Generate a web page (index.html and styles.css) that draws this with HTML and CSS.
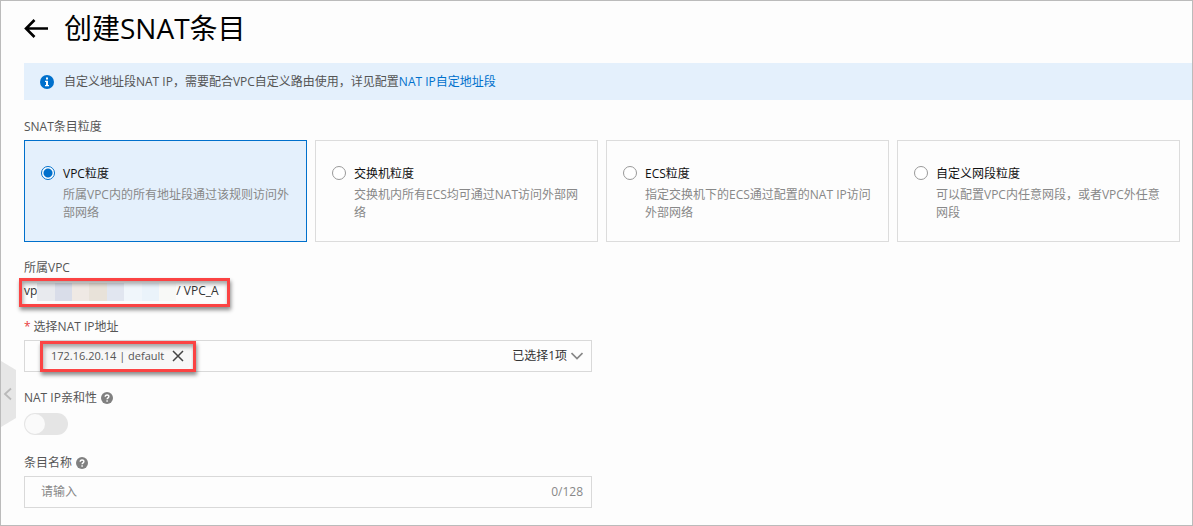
FILE: index.html
```html
<!DOCTYPE html>
<html lang="zh-CN">
<head>
<meta charset="utf-8">
<meta name="viewport" content="width=device-width, initial-scale=1">
<title>创建SNAT条目</title>
<link rel="stylesheet" href="styles.css">
</head>
<body>
<main class="page">
  <button class="drawer-handle" type="button" aria-label="展开侧栏">
    <svg width="15" height="66" viewBox="0 0 15 66"><path d="M0 0L15 9V57L0 66Z" fill="#e6e6e6"/><path d="M10 27.500L4 33L10 38.500" fill="none" stroke="#b9b9b9" stroke-width="1.800"/></svg>
  </button>

  <header class="page-header">
    <a class="back" href="#" aria-label="返回">
      <svg width="26" height="22" viewBox="0 0 26 22" fill="none" stroke="#000" stroke-width="2.600"><path d="M2 11.500H24M10.500 3L2 11.500L10.500 20"/></svg>
    </a>
    <h1 class="title">创建<span class="title-latin">SNAT</span>条目</h1>
  </header>

  <div class="notice">
    <svg class="notice-icon" width="14" height="14" viewBox="0 0 14 14"><circle cx="7" cy="7" r="7" fill="#0070cc"/><path d="M6 2.500h2v2H6zM5 5.700h3v4.300h1v1.300H5V10h1V7H5z" fill="#fff"/></svg>
    <p class="notice-text">自定义地址段NAT IP，需要配合VPC自定义路由使用，详见配置<a class="link" href="#">NAT IP自定地址段</a></p>
  </div>

  <form class="form">
    <fieldset class="group">
      <legend class="label">SNAT条目粒度</legend>
      <div class="cards">
        <label class="card card-selected">
          <input class="radio" type="radio" name="granularity" checked>
          <span class="card-body"><span class="card-title">VPC粒度</span><span class="card-desc">所属VPC内的所有地址段通过该规则访问外部网络</span></span>
        </label>
        <label class="card">
          <input class="radio" type="radio" name="granularity">
          <span class="card-body"><span class="card-title">交换机粒度</span><span class="card-desc">交换机内所有ECS均可通过NAT访问外部网络</span></span>
        </label>
        <label class="card">
          <input class="radio" type="radio" name="granularity">
          <span class="card-body"><span class="card-title">ECS粒度</span><span class="card-desc">指定交换机下的ECS通过配置的NAT IP访问外部网络</span></span>
        </label>
        <label class="card">
          <input class="radio" type="radio" name="granularity">
          <span class="card-body"><span class="card-title">自定义网段粒度</span><span class="card-desc">可以配置VPC内任意网段，或者VPC外任意网段</span></span>
        </label>
      </div>
    </fieldset>

    <div class="field">
      <div class="label">所属VPC</div>
      <div class="vpc">
        <span>vp</span>
        <span class="mask"><i class="m1"></i><i class="m2"></i><i class="m3"></i><i class="m4"></i><i class="m5"></i><i class="m6"></i><i class="m7"></i><i class="m8"></i></span>
        <span>/ VPC_A</span>
        <span class="mark mark-vpc"></span>
      </div>
    </div>

    <div class="field">
      <div class="label label-required" id="nat-label"><span class="required">*</span>选择NAT IP地址</div>
      <div class="box" role="group" aria-labelledby="nat-label">
        <span class="tag">172.16.20.14 | default
          <button class="tag-close" type="button" aria-label="移除"><svg width="12" height="12" viewBox="0 0 12 12" stroke="#444" stroke-width="1.500"><path d="M1 1L11 11M11 1L1 11"/></svg></button>
          <span class="mark mark-tag"></span>
        </span>
        <button class="picker" type="button">已选择1项<svg width="12" height="8" viewBox="0 0 12 8" fill="none" stroke="#888" stroke-width="1.700"><path d="M.5 1L6 6.500L11.500 1"/></svg></button>
      </div>
    </div>

    <div class="field">
      <label class="label" for="affinity">NAT IP亲和性
        <svg class="help" width="12" height="12" viewBox="0 0 12 12"><circle cx="6" cy="6" r="6" fill="#808080"/><path d="M4.200 4.800C4.200 2.300 8 2.500 7.900 4.600C7.900 5.900 6.100 5.900 6.100 7.300M6.100 8.300V9.700" fill="none" stroke="#fff" stroke-width="1.400"/></svg>
      </label>
      <input class="switch" type="checkbox" role="switch" id="affinity">
    </div>

    <div class="field">
      <label class="label" for="entry-name">条目名称
        <svg class="help" width="12" height="12" viewBox="0 0 12 12"><circle cx="6" cy="6" r="6" fill="#808080"/><path d="M4.200 4.800C4.200 2.300 8 2.500 7.900 4.600C7.900 5.900 6.100 5.900 6.100 7.300M6.100 8.300V9.700" fill="none" stroke="#fff" stroke-width="1.400"/></svg>
      </label>
      <div class="box">
        <input class="text-input" id="entry-name" type="text" maxlength="128" placeholder="请输入">
        <span class="counter">0/128</span>
      </div>
    </div>
  </form>
</main>
</body>
</html>
```
FILE: styles.css
```css
* { box-sizing: border-box; }

body {
  margin: 0;
  background: #fdfdfd;
  color: #555;
  font: 12px/20px "Open Sans", "Noto Sans CJK SC", sans-serif;
}

button, input { font: inherit; color: inherit; }
button { padding: 0; border: 0; background: none; cursor: pointer; }
svg { display: block; flex: none; }

.page {
  position: relative;
  min-height: 100vh;
  padding: 7px 0 17px 23px;
  border: 1px solid #bbb;
}

.drawer-handle { position: absolute; left: 0; top: 360px; }

.page-header { display: flex; align-items: center; gap: 14px; height: 40px; }
.title { margin: 0; color: #000; font-size: 28px; line-height: 40px; font-weight: 400; }
.title-latin { font-weight: 500; }

.notice {
  display: flex;
  align-items: center;
  gap: 10px;
  min-height: 37px;
  margin-top: 15px;
  padding: 0 16px;
  background: #e4f0fc;
}
.notice-text { margin: 0; }
.link { color: #0070cc; text-decoration: none; }

.form { display: flex; flex-direction: column; gap: 16px; margin-top: 17px; }
.group { min-width: 0; margin: 0; padding: 0; border: 0; }
.label { display: flex; align-items: center; gap: 4px; padding: 0; margin-bottom: 3px; }
.label-required { gap: 3px; }
.required { color: #e83b3b; }

.cards {
  display: grid;
  grid-template-columns: repeat(4, 1fr);
  gap: 8px;
  margin-right: 12px;
}
.card {
  display: flex;
  gap: 8px;
  min-height: 102px;
  padding: 23px 12px 16px 16px;
  border: 1px solid #dcdcdc;
}
.card-selected { border-color: #0070cc; background: #e4f0fc; }
.card-body { display: flex; flex-direction: column; gap: 2px; }
.card-title { color: #111; }
.card-desc { color: #888; line-height: 18px; }

.radio {
  flex: none;
  appearance: none;
  width: 14px;
  height: 14px;
  margin: 2px 0 0;
  border: 1px solid #999;
  border-radius: 50%;
  background: #fff;
}
.radio:checked {
  border-color: #0070cc;
  background: radial-gradient(circle, #0070cc 4px, #fff 5px);
}

.field { max-width: 568px; }

.vpc { position: relative; display: flex; width: max-content; height: 20px; color: #333; }
.mask { display: grid; grid-template-columns: repeat(8, 1fr); width: 139px; height: 18px; margin-top: 2px; }
.m1 { background: #e8eaee; }
.m2 { background: #d9dde9; }
.m3 { background: #efe9e4; }
.m4 { background: #e8e2d9; }
.m5 { background: #e1e6f0; }
.m6 { background: #f0f6fb; }
.m7 { background: #eaf3fa; }
.m8 { background: #f8f9f7; }

.mark {
  position: absolute;
  border: 3px solid #fb4343;
  box-shadow: 1px 3px 4px rgba(0, 0, 0, .45), inset 1px 3px 4px rgba(0, 0, 0, .35);
  pointer-events: none;
}
.mark-vpc { inset: -3px -11px -6px -5px; }
.mark-tag { inset: -3px -6px -4px -5px; }

.box {
  display: flex;
  align-items: center;
  justify-content: space-between;
  height: 32px;
  padding: 0 8px 0 16px;
  border: 1px solid #d9d9d9;
}
.tag {
  position: relative;
  display: flex;
  align-items: center;
  gap: 8px;
  height: 24px;
  margin-left: 4px;
  padding: 0 6px;
  border-radius: 3px;
  background: #f7f7f7;
  font-size: 11px;
}
.picker { display: flex; align-items: center; gap: 4px; color: #333; }

.switch {
  display: block;
  appearance: none;
  width: 44px;
  height: 22px;
  margin: 5px 0 18px;
  padding: 1px;
  border-radius: 11px;
  background: #e5e5e5;
}
.field:has(.switch) .label { margin-bottom: 0; }
.field:has(.switch) { margin-bottom: -16px; }
.switch::before {
  content: "";
  display: block;
  width: 20px;
  height: 20px;
  border-radius: 50%;
  background: #fafafa;
}
.switch:checked { background: #0070cc; }
.switch:checked::before { margin-left: auto; }

.text-input { flex: 1; min-width: 0; padding: 0; border: 0; outline: 0; background: none; }
.text-input::placeholder { color: #888; opacity: 1; }
.counter { color: #888; }
```
